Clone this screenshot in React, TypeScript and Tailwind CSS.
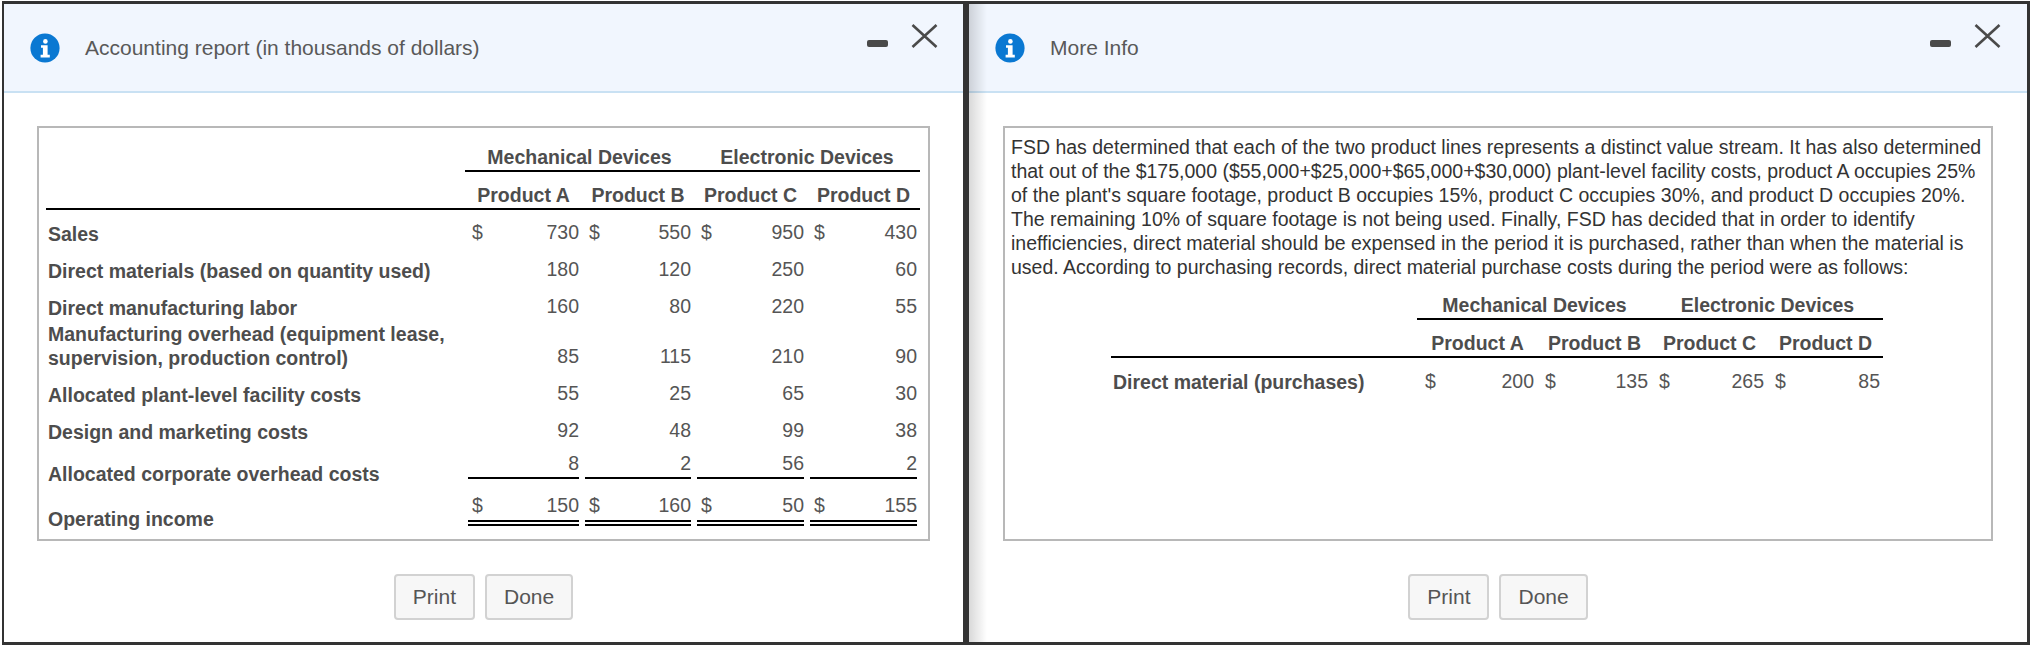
import React from "react";

const font = "font-['Liberation_Sans',Arial,sans-serif]";

function InfoIcon() {
  return (
    <svg width="30" height="30" viewBox="0 0 30 30" className="shrink-0">
      <circle cx="15" cy="15" r="14.6" fill="#0a78d2" />
      <circle cx="15.4" cy="8.4" r="2.3" fill="#fff" />
      <path d="M11 12.2h6.6v9.6h2.2v2.6H10.6v-2.6h2.3v-7H11z" fill="#fff" />
    </svg>
  );
}

function WindowControls() {
  return (
    <div className="ml-auto flex items-start self-start">
      <div className="mt-[36px] h-[7px] w-[21px] rounded-[2px] bg-[#4a4a4a]" />
      <svg width="27" height="24" viewBox="0 0 27 24" className="ml-[23px] mt-[20px]">
        <path d="M1.5 1 L25.5 23 M25.5 1 L1.5 23" stroke="#4a4a4a" strokeWidth="2.6" fill="none" />
      </svg>
    </div>
  );
}

function Header({ title, pr }: { title: string; pr: string }) {
  return (
    <div className={`flex h-[89px] shrink-0 items-center border-b-2 border-[#c9e1f3] bg-[#f1f6fe] pl-[26px] ${pr}`}>
      <InfoIcon />
      <span className="ml-[25px] text-[21px] leading-[30px] text-[#595959]">{title}</span>
      <WindowControls />
    </div>
  );
}

function Buttons() {
  return (
    <div className="mt-[33px] flex justify-center gap-[10px]">
      {["Print", "Done"].map((t) => (
        <button
          key={t}
          className="h-[46px] rounded-[4px] border-2 border-[#d2d2d2] bg-[#f7f7f7] px-[17px] text-[21px] text-[#555]"
        >
          {t}
        </button>
      ))}
    </div>
  );
}

function Money({ sign, value }: { sign?: boolean; value: string }) {
  return (
    <div className="flex justify-between text-[#555]">
      <span className="pl-[4px]">{sign ? "$" : ""}</span>
      <span>{value}</span>
    </div>
  );
}

const leftCols = "grid grid-cols-[416px_111px_106px_107px_107px] gap-x-[6px]";

type Row = { label: React.ReactNode; vals: string[]; h: string; lp: string; np: string; sign?: boolean; line?: string };

const leftRows: Row[] = [
  { label: "Sales", vals: ["730", "550", "950", "430"], h: "grid-rows-[37px]", lp: "pt-[12px]", np: "pt-[10px]", sign: true },
  { label: "Direct materials (based on quantity used)", vals: ["180", "120", "250", "60"], h: "grid-rows-[37px]", lp: "pt-[12px]", np: "pt-[10px]" },
  { label: "Direct manufacturing labor", vals: ["160", "80", "220", "55"], h: "grid-rows-[37px]", lp: "pt-[12px]", np: "pt-[10px]" },
  {
    label: (
      <>
        Manufacturing overhead (equipment lease,
        <br />
        supervision, production control)
      </>
    ),
    vals: ["85", "115", "210", "90"],
    h: "grid-rows-[50px]",
    lp: "pt-[1px]",
    np: "pt-[23px]",
  },
  { label: "Allocated plant-level facility costs", vals: ["55", "25", "65", "30"], h: "grid-rows-[37px]", lp: "pt-[12px]", np: "pt-[10px]" },
  { label: "Design and marketing costs", vals: ["92", "48", "99", "38"], h: "grid-rows-[37px]", lp: "pt-[12px]", np: "pt-[10px]" },
  { label: "Allocated corporate overhead costs", vals: ["8", "2", "56", "2"], h: "grid-rows-[34px]", lp: "pt-[17px]", np: "pt-[6px]", line: "border-b-2 border-black" },
  { label: "Operating income", vals: ["150", "160", "50", "155"], h: "grid-rows-[47px]", lp: "pt-[28px]", np: "pt-[14px]", sign: true, line: "border-b-[6px] border-double border-black" },
];

function LeftTable() {
  return (
    <div className="ml-[7px] w-[874px] pt-[6px] text-[19.5px] leading-[24px]">
      <div className="ml-[419px] flex h-[38px] items-end border-b-2 border-black pb-px font-bold text-[#4d4d4d]">
        <div className="w-[229px] text-center">Mechanical Devices</div>
        <div className="w-[226px] text-center">Electronic Devices</div>
      </div>
      <div className={`${leftCols} h-[38px] items-end border-b-2 border-black pb-px font-bold text-[#4d4d4d]`}>
        <div />
        {["Product A", "Product B", "Product C", "Product D"].map((p) => (
          <div key={p} className="whitespace-nowrap text-center">{p}</div>
        ))}
      </div>
      {leftRows.map((r, i) => (
        <div key={i} className={`${leftCols} ${r.h}`}>
          <div className={`whitespace-nowrap pl-[2px] font-bold text-[#4d4d4d] ${r.lp}`}>{r.label}</div>
          {r.vals.map((v, j) => (
            <div key={j} className={`${r.np} ${r.line ?? ""}`}>
              <Money sign={r.sign} value={v} />
            </div>
          ))}
        </div>
      ))}
    </div>
  );
}

const rightCols = "grid grid-cols-[303px_113px_107px_109px_109px] gap-x-[7px]";

function RightTable() {
  return (
    <div className="ml-[106px] w-[772px] text-[19.5px] leading-[24px]">
      <div className="ml-[306px] flex h-[41px] items-end border-b-2 border-black pb-px font-bold text-[#4d4d4d]">
        <div className="w-[235px] text-center">Mechanical Devices</div>
        <div className="w-[231px] text-center">Electronic Devices</div>
      </div>
      <div className={`${rightCols} h-[38px] items-end border-b-2 border-black pb-px font-bold text-[#4d4d4d]`}>
        <div />
        {["Product A", "Product B", "Product C", "Product D"].map((p) => (
          <div key={p} className="whitespace-nowrap text-center">{p}</div>
        ))}
      </div>
      <div className={`${rightCols} grid-rows-[37px]`}>
        <div className="pl-[2px] pt-[12px] font-bold text-[#4d4d4d]">Direct material (purchases)</div>
        {["200", "135", "265", "85"].map((v) => (
          <div key={v} className="pt-[11px]">
            <Money sign value={v} />
          </div>
        ))}
      </div>
    </div>
  );
}

export default function App() {
  return (
    <div className={`${font} flex h-[645px] w-[2032px] overflow-hidden bg-white pl-[2px] pt-px`}>
      <div className="flex h-[644px] w-[967px] shrink-0 flex-col border-y-[3px] border-l-2 border-r-[6px] border-[#333] bg-white">
        <Header title="Accounting report (in thousands of dollars)" pr="pr-[25px]" />
        <div className="px-[33px] pt-[33px]">
          <div className="h-[415px] border-2 border-[#b8b8b8]">
            <LeftTable />
          </div>
          <Buttons />
        </div>
      </div>
      <div className="relative flex h-[644px] w-[1061px] shrink-0 flex-col border-y-[3px] border-r-[3px] border-[#333] bg-white">
        <div className="pointer-events-none absolute inset-y-0 left-0 w-[18px] bg-gradient-to-r from-black/15 to-transparent" />
        <Header title="More Info" pr="pr-[26px]" />
        <div className="px-[34px] pt-[33px]">
          <div className="h-[415px] border-2 border-[#b8b8b8]">
            <p className="whitespace-nowrap pl-[6px] pt-[7px] text-[19.5px] leading-[24px] text-[#333]">
              FSD has determined that each of the two product lines represents a distinct value stream. It has also determined
              <br />
              that out of the $175,000 ($55,000+$25,000+$65,000+$30,000) plant-level facility costs, product A occupies 25%
              <br />
              of the plant's square footage, product B occupies 15%, product C occupies 30%, and product D occupies 20%.
              <br />
              The remaining 10% of square footage is not being used. Finally, FSD has decided that in order to identify
              <br />
              inefficiencies, direct material should be expensed in the period it is purchased, rather than when the material is
              <br />
              used. According to purchasing records, direct material purchase costs during the period were as follows:
            </p>
            <RightTable />
          </div>
          <Buttons />
        </div>
      </div>
    </div>
  );
}
